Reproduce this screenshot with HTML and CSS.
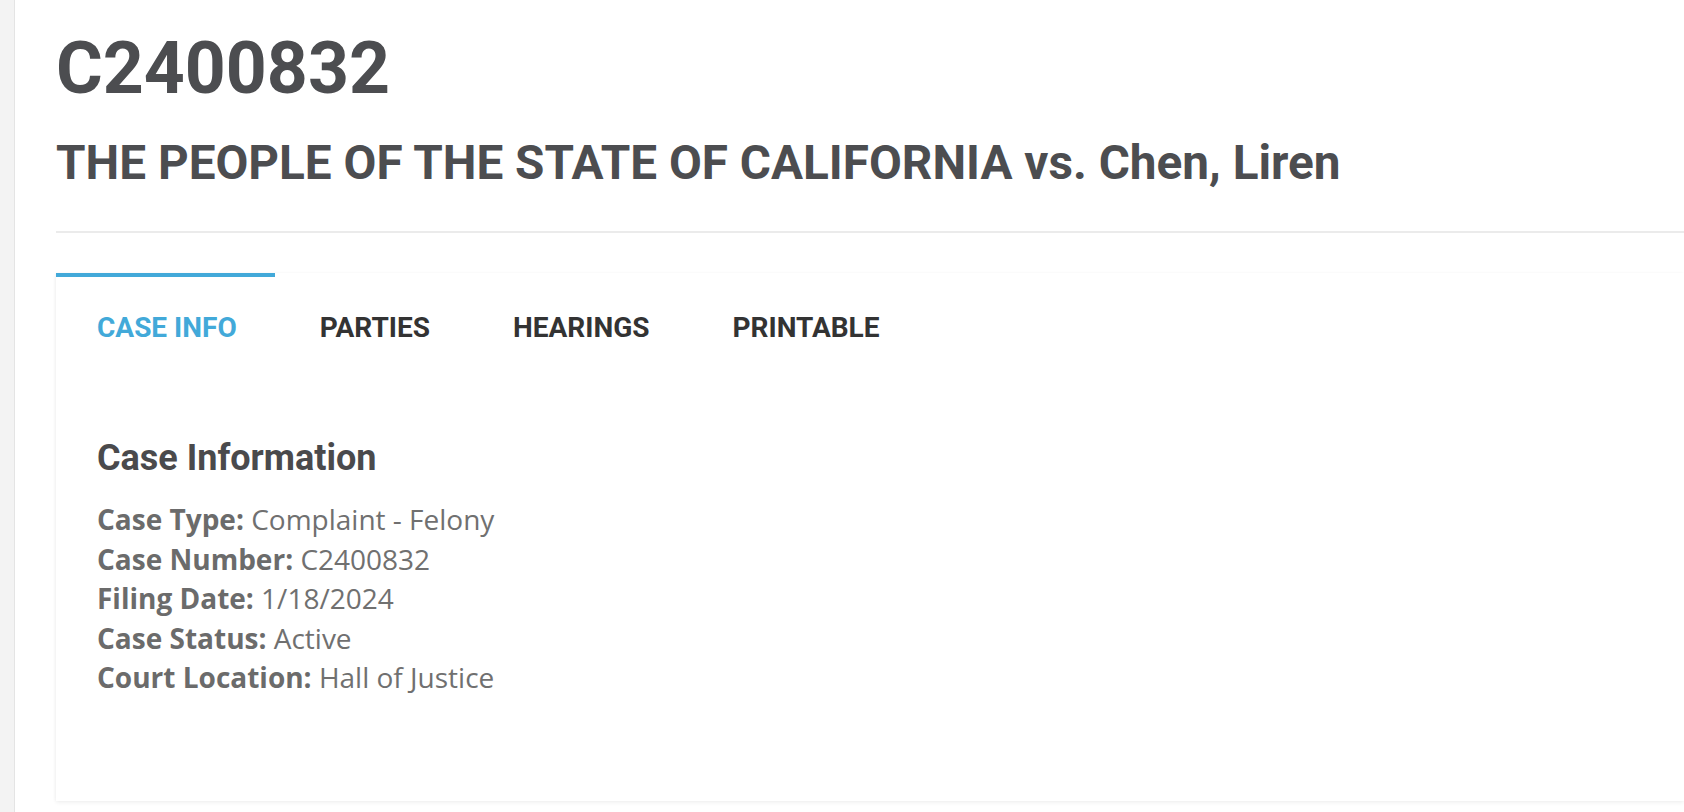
FILE: index.html
```html
<!DOCTYPE html>
<html lang="en">
<head>
<meta charset="utf-8">
<title>C2400832</title>
<link rel="stylesheet" href="styles.css">
</head>
<body>
<div class="page">
  <aside class="sidebar"></aside>
  <main class="main">
    <h1 class="case-no">C2400832</h1>
    <h2 class="case-title">THE PEOPLE OF THE STATE OF CALIFORNIA vs. Chen, Liren</h2>
    <hr class="divider">
    <section class="card">
      <nav class="tabs">
        <a class="tab active">CASE INFO</a>
        <a class="tab">PARTIES</a>
        <a class="tab">HEARINGS</a>
        <a class="tab">PRINTABLE</a>
      </nav>
      <div class="panel">
        <h3 class="panel-title">Case Information</h3>
        <dl class="info">
          <div class="row"><dt>Case Type:</dt> <dd>Complaint - Felony</dd></div>
          <div class="row"><dt>Case Number:</dt> <dd>C2400832</dd></div>
          <div class="row"><dt>Filing Date:</dt> <dd>1/18/2024</dd></div>
          <div class="row"><dt>Case Status:</dt> <dd>Active</dd></div>
          <div class="row"><dt>Court Location:</dt> <dd>Hall of Justice</dd></div>
        </dl>
      </div>
    </section>
  </main>
</div>
</body>
</html>
```
FILE: styles.css
```css
html, body {
  margin: 0;
  padding: 0;
  background: #ffffff;
}

body {
  font-family: Roboto, "Liberation Sans", sans-serif;
  overflow: hidden;
}

.page {
  display: flex;
  min-height: 100vh;
}

.sidebar {
  width: 14px;
  flex: 0 0 14px;
  background: #f3f3f3;
  border-right: 1px solid #e4e4e4;
}

.main {
  flex: 1;
  padding: 0 0 0 41px;
  min-width: 0;
}

.case-no {
  margin: 33px 0 0;
  font-family: Roboto, sans-serif;
  font-weight: 700;
  font-size: 71.5px;
  line-height: 72px;
  color: #4c4d50;
}

.case-title {
  margin: 34px 0 0;
  font-family: Roboto, sans-serif;
  font-weight: 700;
  font-size: 47.7px;
  line-height: 48px;
  color: #4c4d50;
  white-space: nowrap;
}

.divider {
  margin: 44px 0 0;
  border: 0;
  height: 2px;
  background: #ebebeb;
}

.card {
  margin-top: 40px;
  background: #ffffff;
  box-shadow: 0 2px 4px rgba(0, 0, 0, 0.05), -1px 0 3px rgba(0, 0, 0, 0.03);
  padding-bottom: 103px;
}

.tabs {
  display: flex;
  gap: 4px;
}

.tab {
  display: block;
  padding: 35px 38px 35px 41px;
  border-top: 4px solid transparent;
  font-family: Roboto, sans-serif;
  font-weight: 700;
  font-size: 28px;
  line-height: 32px;
  color: #333333;
  text-decoration: none;
}

.tab.active {
  border-top-color: #42a9d9;
  color: #42a9d9;
}

.panel {
  padding: 58px 41px 0;
}

.panel-title {
  margin: 0;
  font-family: Roboto, sans-serif;
  font-weight: 700;
  font-size: 36px;
  line-height: 43px;
  color: #4a4a4c;
}

.info {
  margin: 20px 0 0;
  font-family: "Open Sans", sans-serif;
  font-size: 28px;
  line-height: 39.6px;
  color: #707070;
}

.row {
  display: block;
}

.row dt,
.row dd {
  display: inline;
  margin: 0;
}

.row dt {
  font-weight: 700;
  color: #6b6b6b;
}

.row dd {
  font-weight: 400;
}
```
